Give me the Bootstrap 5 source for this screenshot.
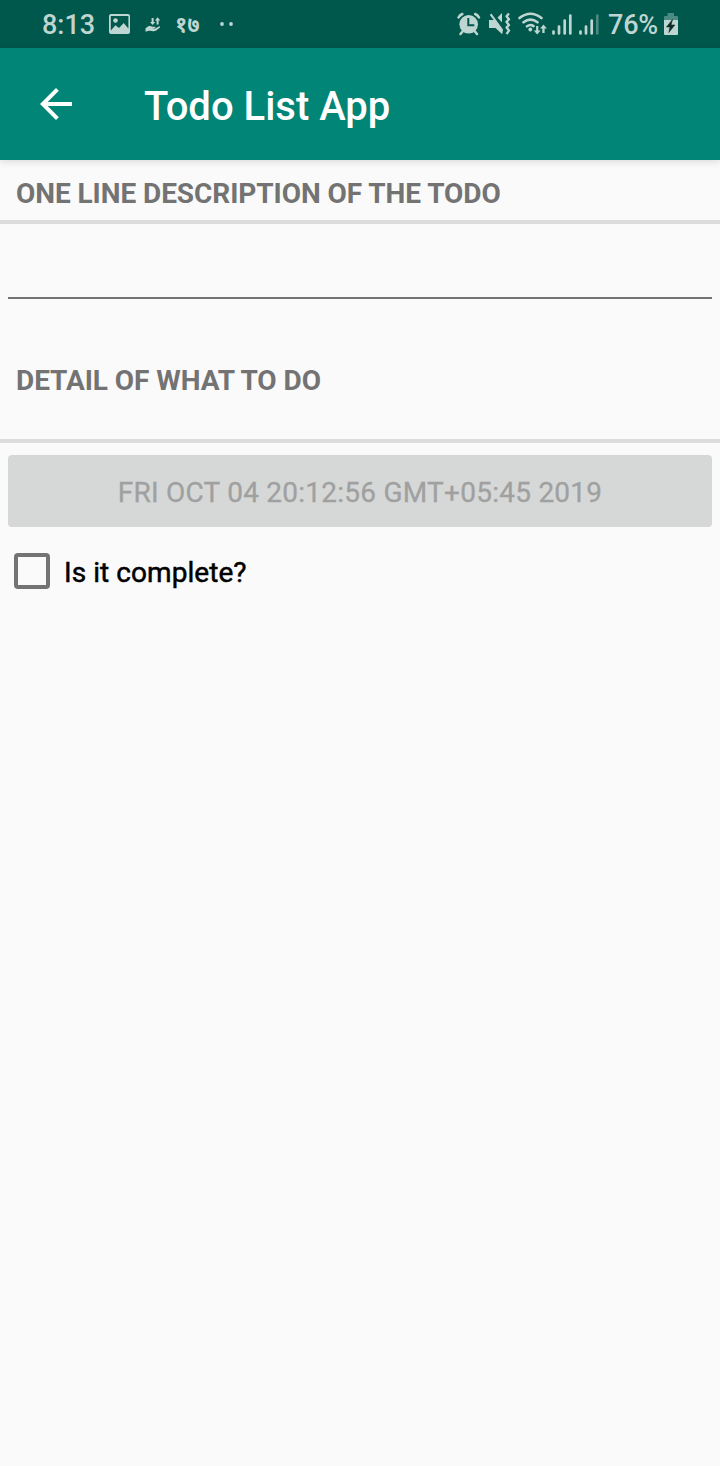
<!DOCTYPE html>
<html lang="en">
<head>
<meta charset="utf-8">
<meta name="viewport" content="width=device-width, initial-scale=1">
<title>Todo List App</title>
<link href="https://cdn.jsdelivr.net/npm/bootstrap@5.3.0/dist/css/bootstrap.min.css" rel="stylesheet">
<style>
body{background:#fafafa;font-family:Roboto,"Noto Sans",sans-serif;color:#000;min-height:1466px;overflow:hidden}
.status{height:48px;background:#00574b;color:#bfd5d2;padding-left:42px;padding-right:41px;font-size:27px;font-weight:500;line-height:50px;white-space:nowrap}
.status svg{height:48px;flex:none;display:block}
.clock{width:67px;padding-top:2px}
.nepali{width:46px;margin-left:13px;font-size:22px;font-weight:700;line-height:47px}
.percent{width:55px;margin-left:9px;padding-top:2px;letter-spacing:-.2px}
.appbar{height:112px;background:#008577;box-shadow:0 2px 7px rgba(0,0,0,.12);position:relative;padding:0 0 0 40px}
.app-title{font-size:40px;font-weight:500;line-height:48px;color:#fff;margin:6px 0 0 72px}
.section-label{font-size:28px;font-weight:700;letter-spacing:-.06px;color:#737373;line-height:32px;padding-left:16px;border-bottom:4px solid #dcdcdc;margin:0;white-space:nowrap}
.label-one{height:64px;padding-top:18px}
.label-two{height:144px;padding-top:66px}
.line-input{height:75px;margin:0 8px;width:704px;border-bottom:2px solid #737373!important}
.line-input:focus{box-shadow:none}
.date-btn.btn{height:72px;margin:12px 8px 0;width:704px;background:#d6d8d7;color:#a0a0a0;border-radius:4px;font-size:28px;font-weight:400;letter-spacing:.25px;-webkit-text-stroke:.3px #a0a0a0;line-height:32px;padding:4px 0 0;opacity:1}
.check-row{margin:26px 0 0 14px;height:36px}
.check-row .form-check-input{width:36px;height:36px;border:4px solid #737373;border-radius:4px;background-color:#fafafa;float:none;margin:0}
.check-row label{font-size:28px;font-weight:400;letter-spacing:.06px;-webkit-text-stroke:.5px #000;line-height:36px;margin-left:14px;padding-top:3px}
</style>
</head>
<body>
<div class="status d-flex align-items-center">
  <span class="clock">8:13</span>
  <svg width="22" viewBox="109 0 22 48"><path fill="currentColor" fill-rule="evenodd" d="M111 14h17a2 2 0 0 1 2 2v16a2 2 0 0 1-2 2h-17a2 2 0 0 1-2-2V16a2 2 0 0 1 2-2zm-.2 2v14.500l4.700-5.200 3.500 2.600 4.700-4.900 4.700 5.500V16z"/><circle cx="115.500" cy="20.500" r="2.300" fill="currentColor"/></svg>
  <svg width="17" viewBox="145 0 17 48" style="margin-left:14px"><g fill="currentColor"><path d="M151.600 18h2v4h1.600l-2.600 3.100-2.600-3.100h1.600zM156.600 24.500v-4h-1.700l2.700-3.300 2.700 3.300h-1.700v4z"/><path d="M145.500 28.300l2.500-1.800c1.600-.9 3-.5 4.300.2h2.400c1.100.2.900 1.400-.2 1.500h-2.300l2.500.5 4.200-2.300c1.100-.4 1.600.6.800 1.400l-3.500 2.800c-1.200.8-3 .8-4.500.5-2-.4-3.500-.8-5.200.5h-1z"/></g></svg>
  <span class="nepali">१७</span>
  <svg width="16" viewBox="219 0 16 48" style="margin-left:-2px"><g fill="currentColor"><circle cx="222" cy="24" r="1.900"/><circle cx="231" cy="24" r="1.900"/></g></svg>
  <svg class="ms-auto" width="24" viewBox="457 0 24 48"><circle cx="468.700" cy="24.300" r="9.300" fill="currentColor"/><path fill="none" stroke="currentColor" stroke-width="2.500" stroke-linecap="round" d="M458.500 17.500q1.300-2.500 3.800-3.500M479 17.500q-1.300-2.500-3.800-3.500M463 31l-2.500 3M474.500 31l2.500 3"/><path fill="none" stroke="#00574b" stroke-width="2" d="M468.300 18v7.300h6"/></svg>
  <svg width="23" viewBox="488 0 23 48" style="margin-left:7px"><path fill="currentColor" d="M489 20h4.700l-3.900-5 1.600-1.500L503 29.500l-.8 4.700-6.700-6.200H489zM497.500 17.500l4.500-4.500v9.500z"/><path fill="none" stroke="currentColor" stroke-width="2.300" stroke-linejoin="round" d="M509 13.500l-2.500 2.700 2.500 3-2.500 2.700 2.500 3-2.500 2.700 2.500 3-2.500 3.400"/></svg>
  <svg width="30" viewBox="518 0 30 48" style="margin-left:7px"><g fill="none" stroke="currentColor" stroke-width="2.600" stroke-linecap="round"><path d="M519.500 18q11-8.500 22 0M523.500 22.300q7-5.300 14 0M527 26.300q3.500-2.400 6.500-.2"/></g><circle cx="530.300" cy="29.500" r="1.900" fill="currentColor"/><path fill="currentColor" d="M536.100 26h2.200v4.500h2.300l-3.400 4-3.400-4h2.300zM542.300 33v-4.500h-2.200l3.400-4 3.400 4h-2.300V33z"/></svg>
  <svg width="20" viewBox="552 0 20 48" style="margin-left:4px"><path stroke="currentColor" stroke-width="2.700" stroke-linecap="round" d="M553.500 31.500v2M559 26.500v7M564.700 20.500v13M570.300 15.500v18"/></svg>
  <svg width="20" viewBox="579 0 20 48" style="margin-left:7px"><path stroke="currentColor" stroke-width="2.700" stroke-linecap="round" d="M580.500 31.500v2M586 26.500v7M591.700 20.500v13"/><path stroke="#4b8a82" stroke-width="2.600" d="M597.300 14.500v20"/></svg>
  <span class="percent">76%</span>
  <svg width="15" viewBox="664 0 15 48" style="margin-left:1px"><path fill="#4b8a82" d="M667.500 13h6.500v3h3q1 0 1 1v4h-14v-4q0-1 1-1h2.500z"/><path fill="currentColor" d="M664 20h14v14q0 1-1 1h-12q-1 0-1-1z"/><path fill="#102c28" stroke="#102c28" stroke-width=".6" d="M672.500 19.500l-6 7.500h3.500l-1.200 5.500 6-7.500H671z"/></svg>
</div>
<header class="appbar d-flex align-items-center">
  <svg width="32" height="32" viewBox="4 4 16 16"><path fill="#fff" d="M20 11H7.830l5.590-5.590L12 4l-8 8 8 8 1.410-1.410L7.830 13H20z"/></svg>
  <h1 class="app-title">Todo List App</h1>
</header>
<main class="d-flex flex-column">
  <h2 class="section-label label-one">ONE LINE DESCRIPTION OF THE TODO</h2>
  <input class="line-input form-control border-0 rounded-0 bg-transparent" type="text" aria-label="Description">
  <h2 class="section-label label-two">DETAIL OF WHAT TO DO</h2>
  <button class="date-btn btn border-0" type="button" disabled>FRI OCT 04 20:12:56 GMT+05:45 2019</button>
  <div class="check-row d-flex align-items-center">
    <input class="form-check-input" type="checkbox" id="complete"><label for="complete">Is it complete?</label>
  </div>
</main>
<script src="https://cdn.jsdelivr.net/npm/bootstrap@5.3.0/dist/js/bootstrap.bundle.min.js"></script>
</body>
</html>
